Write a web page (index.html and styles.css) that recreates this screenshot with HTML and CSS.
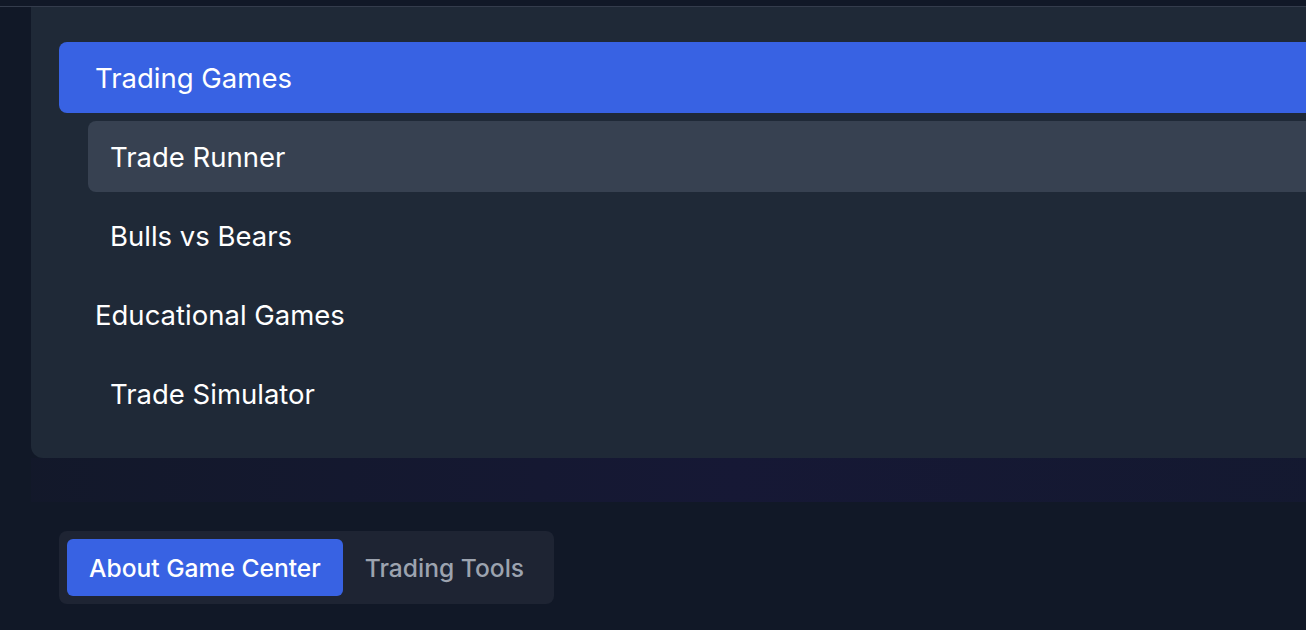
FILE: index.html
```html
<!DOCTYPE html>
<html lang="en">
<head>
<meta charset="utf-8">
<title>Game Center</title>
<link rel="stylesheet" href="styles.css">
</head>
<body>
<div class="topbar"></div>
<div class="layout">
  <nav class="panel">
    <ul class="menu">
      <li class="item cat active">Trading Games</li>
      <li class="item sub selected">Trade Runner</li>
      <li class="item sub">Bulls vs Bears</li>
      <li class="item cat">Educational Games</li>
      <li class="item sub">Trade Simulator</li>
    </ul>
  </nav>
  <div class="glow"></div>
</div>
<div class="tabs">
  <button class="tab active">About Game Center</button>
  <button class="tab">Trading Tools</button>
</div>
</body>
</html>
```
FILE: styles.css
```css
html, body {
  margin: 0;
  padding: 0;
}
body {
  background: #111827;
  font-family: Inter, "Noto Sans", sans-serif;
  color: #ffffff;
  width: 1306px;
  height: 630px;
  overflow: hidden;
}
.topbar {
  height: 6px;
  border-bottom: 1px solid #343c4c;
}
.layout {
  padding-left: 31px;
}
.panel {
  background: #1f2937;
  border-radius: 0 0 0 12px;
  padding: 35px 0 29px 28px;
}
.menu {
  list-style: none;
  margin: 0;
  padding: 0;
  display: flex;
  flex-direction: column;
  gap: 8px;
}
.item {
  height: 71px;
  display: flex;
  align-items: center;
  font-size: 27.5px;
  font-weight: 400;
  border-radius: 8px 0 0 8px;
}
.item.cat {
  padding-left: 36px;
}
.item.sub {
  margin-left: 29px;
  padding-left: 22px;
}
.item.active {
  background: #3862e3;
}
.item.selected {
  background: #374151;
}
.glow {
  height: 44px;
  background: linear-gradient(90deg, rgba(20, 24, 45, 0.5) 0%, rgba(28, 24, 70, 0.45) 55%, rgba(24, 26, 62, 0.4) 100%);
}
.tabs {
  display: inline-flex;
  margin: 29px 0 0 59px;
  padding: 8px;
  background: #1e2433;
  border-radius: 8px;
}
.tab {
  height: 57px;
  padding: 0 22px;
  border: 0;
  background: transparent;
  color: #9ca3af;
  font-family: Inter, "Noto Sans", sans-serif;
  font-size: 24.6px;
  font-weight: 500;
  border-radius: 6px;
}
.tab.active {
  background: #3862e3;
  color: #ffffff;
}
```
